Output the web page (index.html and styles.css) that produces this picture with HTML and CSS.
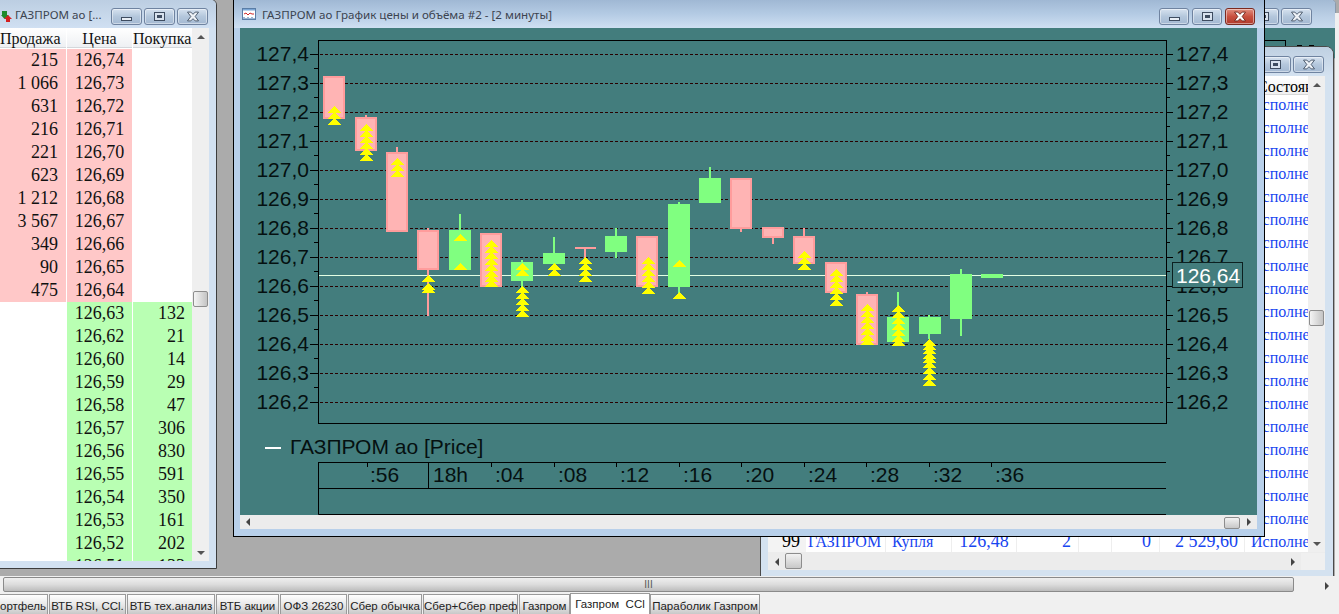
FILE: index.html
```html
<!DOCTYPE html>
<html lang="ru">
<head>
<meta charset="utf-8">
<title>ГАЗПРОМ ао</title>
<link rel="stylesheet" href="styles.css">
</head>
<body>
<div class="app">
  <div class="desktop">

    <section class="win win-back">
      <header class="titlebar">
        <div class="controls">
          <span class="btn"><i class="g-min"></i></span>
          <span class="btn"><i class="g-max"></i></span>
          <span class="btn"><svg class="g-x" viewBox="0 0 12 10"><path d="M1 1h3l2 2 2-2h3L8 5l3 4H8L6 7 4 9H1l3-4z"/></svg></span>
        </div>
      </header>
      <div class="back-body"><div class="back-axis"></div><div class="back-dash"></div></div>
    </section>

    <div class="edge-strip"></div>

    <section class="win win-orders">
      <header class="titlebar">
        <div class="controls">
          <span class="btn"><i class="g-max"></i></span>
          <span class="btn"><svg class="g-x" viewBox="0 0 12 10"><path d="M1 1h3l2 2 2-2h3L8 5l3 4H8L6 7 4 9H1l3-4z"/></svg></span>
        </div>
      </header>
      <div class="win-client">
        <div class="orders-main">
          <div class="orders-table">
            <div class="orders-row orders-head"><span class="o-state">Состояние</span></div>
            <div class="orders-row"><span class="o-state">Исполнена</span></div>
            <div class="orders-row"><span class="o-state">Исполнена</span></div>
            <div class="orders-row"><span class="o-state">Исполнена</span></div>
            <div class="orders-row"><span class="o-state">Исполнена</span></div>
            <div class="orders-row"><span class="o-state">Исполнена</span></div>
            <div class="orders-row"><span class="o-state">Исполнена</span></div>
            <div class="orders-row"><span class="o-state">Исполнена</span></div>
            <div class="orders-row"><span class="o-state">Исполнена</span></div>
            <div class="orders-row"><span class="o-state">Исполнена</span></div>
            <div class="orders-row"><span class="o-state">Исполнена</span></div>
            <div class="orders-row"><span class="o-state">Исполнена</span></div>
            <div class="orders-row"><span class="o-state">Исполнена</span></div>
            <div class="orders-row"><span class="o-state">Исполнена</span></div>
            <div class="orders-row"><span class="o-state">Исполнена</span></div>
            <div class="orders-row"><span class="o-state">Исполнена</span></div>
            <div class="orders-row"><span class="o-state">Исполнена</span></div>
            <div class="orders-row"><span class="o-state">Исполнена</span></div>
            <div class="orders-row"><span class="o-state">Исполнена</span></div>
            <div class="orders-row"><span class="o-state">Исполнена</span></div>
            <div class="orders-row">
              <span class="o-num">99</span><span class="o-name">ГАЗПРОМ</span><span class="o-side">Купля</span><span class="o-price">126,48</span><span class="o-qty">2</span><span class="o-gap"></span><span class="o-rest">0</span><span class="o-sum">2 529,60</span><span class="o-state">Исполнена</span>
            </div>
          </div>
          <div class="vscroll">
            <span class="arrow up"></span><span class="vspace"><span class="vthumb orders-thumb"></span></span><span class="arrow down"></span>
          </div>
        </div>
        <div class="orders-hscroll">
          <span class="arrow left"></span><span class="hthumb"></span><span class="hspace"></span><span class="arrow right"></span><span class="grip"></span>
        </div>
      </div>
    </section>

    <section class="win win-book">
      <header class="titlebar">
        <svg class="book-icon" viewBox="0 0 11 11"><path fill="#1d8a2c" d="M1 0h5v4h2L3.5 8 0 4h1z"/><path fill="#d42020" d="M7 4l4 4H9v3H5V8H3z"/></svg>
        <span class="title">ГАЗПРОМ ао [...</span>
        <div class="controls">
          <span class="btn"><i class="g-min"></i></span>
          <span class="btn"><i class="g-max"></i></span>
          <span class="btn"><svg class="g-x" viewBox="0 0 12 10"><path d="M1 1h3l2 2 2-2h3L8 5l3 4H8L6 7 4 9H1l3-4z"/></svg></span>
        </div>
      </header>
      <div class="book-client">
        <div class="book-table">
          <div class="book-row book-head"><span>Продажа</span><span>Цена</span><span>Покупка</span></div>
          <div class="book-row ask"><span>215</span><span>126,74</span><span></span></div>
          <div class="book-row ask"><span>1 066</span><span>126,73</span><span></span></div>
          <div class="book-row ask"><span>631</span><span>126,72</span><span></span></div>
          <div class="book-row ask"><span>216</span><span>126,71</span><span></span></div>
          <div class="book-row ask"><span>221</span><span>126,70</span><span></span></div>
          <div class="book-row ask"><span>623</span><span>126,69</span><span></span></div>
          <div class="book-row ask"><span>1 212</span><span>126,68</span><span></span></div>
          <div class="book-row ask"><span>3 567</span><span>126,67</span><span></span></div>
          <div class="book-row ask"><span>349</span><span>126,66</span><span></span></div>
          <div class="book-row ask"><span>90</span><span>126,65</span><span></span></div>
          <div class="book-row ask"><span>475</span><span>126,64</span><span></span></div>
          <div class="book-row bid"><span></span><span>126,63</span><span>132</span></div>
          <div class="book-row bid"><span></span><span>126,62</span><span>21</span></div>
          <div class="book-row bid"><span></span><span>126,60</span><span>14</span></div>
          <div class="book-row bid"><span></span><span>126,59</span><span>29</span></div>
          <div class="book-row bid"><span></span><span>126,58</span><span>47</span></div>
          <div class="book-row bid"><span></span><span>126,57</span><span>306</span></div>
          <div class="book-row bid"><span></span><span>126,56</span><span>830</span></div>
          <div class="book-row bid"><span></span><span>126,55</span><span>591</span></div>
          <div class="book-row bid"><span></span><span>126,54</span><span>350</span></div>
          <div class="book-row bid"><span></span><span>126,53</span><span>161</span></div>
          <div class="book-row bid"><span></span><span>126,52</span><span>202</span></div>
          <div class="book-row bid"><span></span><span>126,51</span><span>133</span></div>
        </div>
        <div class="vscroll">
          <span class="arrow up"></span><span class="vspace"><span class="vthumb book-thumb"></span></span><span class="arrow down"></span>
        </div>
      </div>
    </section>

    <section class="win win-chart">
      <header class="titlebar">
        <svg class="chart-icon" viewBox="0 0 14 14"><rect x="0.5" y="1.5" width="13" height="11" fill="#fff" stroke="#5a7da6"/><rect x="1" y="2" width="12" height="1.5" fill="#7ba6d6"/><path d="M2 7l2-1 2 2 2-2 2 1h2" fill="none" stroke="#d02828"/><path d="M2 12v-2M4 12v-1M6 12v-2M8 12v-1M10 12v-2M12 12v-1" stroke="#3a6ea8"/></svg>
        <span class="title">ГАЗПРОМ ао График цены и объёма #2 - [2 минуты]</span>
        <div class="controls">
          <span class="btn"><i class="g-min"></i></span>
          <span class="btn"><i class="g-max"></i></span>
          <span class="btn close"><svg class="g-x" viewBox="0 0 12 10"><path d="M1 1h3l2 2 2-2h3L8 5l3 4H8L6 7 4 9H1l3-4z"/></svg></span>
        </div>
      </header>
      <div class="chart-client">
        <svg class="chart" viewBox="240 28 1017 487" width="1017" height="487">
          <defs>
            <path id="a" d="M0 0h1v1h1v1h1v1h1v1h1v1h1v1h1v1H-6v-1h1v-1h1v-1h1v-1h1v-1h1v-1h1z"/>
            <g id="s2"><use href="#a"/><use href="#a" y="6"/></g>
            <g id="s3"><use href="#s2"/><use href="#a" y="12"/></g>
            <g id="s4"><use href="#s3"/><use href="#a" y="18"/></g>
            <g id="s5"><use href="#s4"/><use href="#a" y="24"/></g>
            <g id="s6"><use href="#s5"/><use href="#a" y="30"/></g>
            <g id="s7"><use href="#s6"/><use href="#a" y="34"/></g>
            <g id="s8"><use href="#s6"/><use href="#a" y="35"/><use href="#a" y="40"/></g>
          </defs>

          <g class="grid">
            <path d="M310 54.5H1164M310 83.5H1164M310 112.5H1164M310 141.5H1164M310 170.5H1164M310 199.5H1164M310 228.5H1164M310 257.5H1164M310 286.5H1164M310 315.5H1164M310 344.5H1164M310 373.5H1164M310 402.5H1164"/>
          </g>
          <g class="axis">
            <rect x="318.5" y="40.5" width="848" height="383"/>
            <path d="M310 54.5h8M310 83.5h8M310 112.5h8M310 141.5h8M310 170.5h8M310 199.5h8M310 228.5h8M310 257.5h8M310 286.5h8M310 315.5h8M310 344.5h8M310 373.5h8M310 402.5h8"/>
            <path d="M314 68.5h4M314 97.5h4M314 126.5h4M314 155.5h4M314 184.5h4M314 213.5h4M314 242.5h4M314 271.5h4M314 300.5h4M314 329.5h4M314 358.5h4M314 387.5h4"/>
            <path d="M1166 54.5h7M1166 83.5h7M1166 112.5h7M1166 141.5h7M1166 170.5h7M1166 199.5h7M1166 228.5h7M1166 257.5h7M1166 286.5h7M1166 315.5h7M1166 344.5h7M1166 373.5h7M1166 402.5h7"/>
            <path d="M1166 68.5h4M1166 97.5h4M1166 126.5h4M1166 155.5h4M1166 184.5h4M1166 213.5h4M1166 242.5h4M1166 271.5h4M1166 300.5h4M1166 329.5h4M1166 358.5h4M1166 387.5h4"/>
          </g>

          <g class="labels-left">
            <text x="309" y="61">127,4</text><text x="309" y="90">127,3</text><text x="309" y="119">127,2</text><text x="309" y="148">127,1</text><text x="309" y="177">127,0</text><text x="309" y="206">126,9</text><text x="309" y="235">126,8</text><text x="309" y="264">126,7</text><text x="309" y="293">126,6</text><text x="309" y="322">126,5</text><text x="309" y="351">126,4</text><text x="309" y="380">126,3</text><text x="309" y="409">126,2</text>
          </g>
          <g class="labels-right">
            <text x="1176" y="61">127,4</text><text x="1176" y="90">127,3</text><text x="1176" y="119">127,2</text><text x="1176" y="148">127,1</text><text x="1176" y="177">127,0</text><text x="1176" y="206">126,9</text><text x="1176" y="235">126,8</text><text x="1176" y="264">126,7</text><text x="1176" y="293">126,6</text><text x="1176" y="322">126,5</text><text x="1176" y="351">126,4</text><text x="1176" y="380">126,3</text><text x="1176" y="409">126,2</text>
          </g>

          <path class="price-line" d="M319 275.5H1166"/>

          <g class="up">
            <rect x="459" y="214" width="2" height="16"/><rect x="449" y="230" width="22" height="40"/>
            <rect x="521" y="260" width="2" height="30"/><rect x="511" y="262" width="22" height="19"/>
            <rect x="553" y="237" width="2" height="16"/><rect x="543" y="253" width="22" height="11"/>
            <rect x="615" y="228" width="2" height="30"/><rect x="605" y="236" width="22" height="16"/>
            <rect x="678" y="202" width="2" height="91"/><rect x="668" y="204" width="22" height="83"/>
            <rect x="709" y="167" width="2" height="11"/><rect x="699" y="178" width="22" height="25"/>
            <rect x="897" y="292" width="2" height="25"/><rect x="887" y="317" width="22" height="25"/>
            <rect x="928" y="315" width="2" height="24"/><rect x="919" y="317" width="22" height="17"/>
            <rect x="960" y="269" width="2" height="67"/><rect x="950" y="274" width="22" height="45"/>
            <rect x="981" y="274" width="22" height="4"/>
          </g>
          <g class="down-wick">
            <rect x="365" y="115" width="2" height="3"/>
            <rect x="396" y="147" width="2" height="6"/>
            <rect x="427" y="228" width="2" height="88"/>
            <rect x="584" y="248" width="2" height="10"/>
            <rect x="740" y="228" width="2" height="4"/>
            <rect x="772" y="237" width="2" height="7"/>
            <rect x="803" y="228" width="2" height="9"/>
            <rect x="866" y="292" width="2" height="3"/>
          </g>
          <g class="down">
            <rect x="324" y="77" width="20" height="41"/>
            <rect x="356" y="118" width="20" height="32"/>
            <rect x="387" y="153" width="20" height="78"/>
            <rect x="418" y="231" width="20" height="38"/>
            <rect x="481" y="234" width="20" height="52"/>
            <rect x="637" y="237" width="20" height="49"/>
            <rect x="731" y="179" width="20" height="49"/>
            <rect x="763" y="228" width="20" height="9"/>
            <rect x="794" y="237" width="20" height="26"/>
            <rect x="826" y="263" width="20" height="29"/>
            <rect x="857" y="295" width="20" height="49"/>
          </g>
          <rect class="doji" x="575" y="247" width="21" height="2"/>

          <g class="arrows">
            <use href="#s3" x="334" y="106"/>
            <use href="#s6" x="366" y="124"/>
            <use href="#s3" x="397" y="158"/>
            <use href="#a" x="428" y="275"/><use href="#a" x="428" y="283"/><use href="#a" x="428" y="286"/>
            <use href="#a" x="460" y="234"/><use href="#a" x="460" y="263"/>
            <use href="#s8" x="491" y="240"/>
            <use href="#s2" x="522" y="263"/>
            <use href="#s5" x="522" y="286"/>
            <use href="#s2" x="554" y="263"/>
            <use href="#s4" x="585" y="257"/>
            <use href="#s6" x="648" y="257"/>
            <use href="#a" x="679" y="260"/><use href="#a" x="679" y="292"/>
            <use href="#s3" x="804" y="251"/>
            <use href="#s6" x="836" y="269"/>
            <use href="#s7" x="867" y="304"/>
            <use href="#s7" x="898" y="305"/>
            <use href="#a" x="929" y="339"/><use href="#a" x="929" y="343"/><use href="#a" x="929" y="347"/><use href="#a" x="929" y="352"/><use href="#a" x="929" y="356"/><use href="#a" x="929" y="361"/><use href="#a" x="929" y="367"/><use href="#a" x="929" y="373"/><use href="#a" x="929" y="379"/>
          </g>

          <rect class="price-box" x="1172.5" y="262.5" width="70" height="25"/>
          <text class="price-text" x="1176" y="283">126,64</text>

          <path class="legend-dash" d="M265 448h16"/>
          <text class="legend" x="290" y="454">ГАЗПРОМ ао [Price]</text>

          <g class="axis">
            <path d="M318.5 462V514.5H1166M318 462.5H1166M318 488.5H1166M428.5 462V488M367.5 462v5M491.5 462v5M554.5 462v5M616.5 462v5M679.5 462v5M741.5 462v5M804.5 462v5M866.5 462v5M929.5 462v5M991.5 462v5"/>
          </g>
          <g class="time">
            <text x="370" y="482">:56</text><text x="433" y="482">18h</text><text x="495" y="482">:04</text><text x="558" y="482">:08</text><text x="620" y="482">:12</text><text x="683" y="482">:16</text><text x="745" y="482">:20</text><text x="808" y="482">:24</text><text x="870" y="482">:28</text><text x="933" y="482">:32</text><text x="995" y="482">:36</text>
          </g>
        </svg>
        <div class="chart-hscroll">
          <span class="arrow left"></span><span class="hspace"></span><span class="hthumb chart-thumb"></span><span class="arrow right"></span>
        </div>
      </div>
    </section>
  </div>

  <div class="app-scroll">
    <div class="app-thumb"><span class="thumb-grip">III</span></div>
    <span class="arrow right"></span>
  </div>

  <nav class="tabs">
    <span class="tab t1">ортфель</span>
    <span class="tab t2">ВТБ RSI, CCl.</span>
    <span class="tab t3">ВТБ тех.анализ</span>
    <span class="tab t4">ВТБ акции</span>
    <span class="tab t5">ОФЗ 26230</span>
    <span class="tab t6">Сбер обычка</span>
    <span class="tab t7">Сбер+Сбер преф</span>
    <span class="tab t8">Газпром</span>
    <span class="tab t9 active">Газпром&nbsp; CCl</span>
    <span class="tab t10">Параболик Газпром</span>
  </nav>
</div>
</body>
</html>
```
FILE: styles.css
```css
* { box-sizing: border-box; }
html, body { margin: 0; padding: 0; height: 100%; overflow: hidden; background: #f0f0f0; }
.app { width: 1339px; height: 614px; display: flex; flex-direction: column; font-family: "Liberation Serif", serif; }

.desktop { position: relative; height: 576px; background: #ababab; overflow: hidden; flex: none; }
.edge-strip { position: absolute; right: 0; top: 13px; bottom: 0; width: 4px; background: #f0f0f0; }

.win { position: absolute; background: #c9dbee; border: 1px solid #3c3c3c; border-radius: 5px 5px 0 0; display: flex; flex-direction: column; overflow: hidden; }
.titlebar { height: 28px; flex: none; display: flex; align-items: center; position: relative; background: linear-gradient(#a3bad4, #bcd0e6 60%, #c9dbee); }
.title { font: 11.6px "Noto Sans", "Open Sans", sans-serif; color: #3c4450; white-space: nowrap; }
.controls { position: absolute; top: 8px; display: flex; }
.btn { width: 31px; height: 17px; margin-right: 2px; border: 1px solid #6f83a0; border-radius: 3px; background: linear-gradient(#d6e2ef, #b4c7dc 50%, #a4b9d2); display: flex; align-items: center; justify-content: center; box-shadow: inset 0 0 0 1px rgba(255,255,255,.45); }
.btn.close { background: linear-gradient(#e08f80, #c9503f 50%, #b03a2c); border-color: #7c2a20; }
.g-min { display: block; width: 11px; height: 4px; margin-top: 5px; background: #e8eef5; border: 1px solid #3e4c60; }
.g-max { display: block; width: 11px; height: 9px; background: #d8e2ee; border: 1px solid #3e4c60; box-shadow: inset 0 0 0 2px #d8e2ee, inset 0 0 0 4px #3e4c60; }
.g-x { width: 14px; height: 11px; fill: #eef2f7; stroke: #3e4c60; stroke-width: .8; }
.btn.close .g-x { stroke: #6a1f16; fill: #fff; }

/* far background window, top right */
.win-back { left: 1000px; top: -1px; width: 336px; height: 60px; background: #c5d6e8; border-color: #8a9aac; }
.win-back .controls { right: 21px; }
.back-body { flex: 1; background: #437d7d; position: relative; }
.back-axis { position: absolute; left: 255px; top: 12px; width: 30px; height: 6px; border-top: 1px solid #000; border-right: 1px solid #000; }
.back-dash { position: absolute; left: 296px; top: 17px; width: 18px; height: 1px; background: repeating-linear-gradient(90deg, #000 0 5px, transparent 5px 12px); }

/* orders window */
.win-orders { left: 760px; top: 46px; width: 574px; height: 531px; border-color: #4a4a4a; border-radius: 0 8px 0 0; background: #d4e2f0; }
.win-orders .titlebar { height: 29px; background: linear-gradient(#bfd0e2, #d4e2f0); }
.win-orders .controls { top: 9px; right: 7px; }
.win-client { flex: 1; display: flex; flex-direction: column; padding: 0 8px 6px 7px; min-height: 0; }
.orders-main { flex: 1; display: flex; min-height: 0; }
.orders-table { flex: 1; overflow: hidden; background: #fff; color: #1846f0; font-size: 16px; }
.orders-row { height: 23px; display: flex; align-items: stretch; justify-content: flex-end; line-height: 19px; white-space: nowrap; }
.orders-row span { display: block; flex: none; overflow: hidden; }
.orders-head { height: 19px; line-height: 21px; color: #000; background: linear-gradient(#fff, #f0f0f0); border-bottom: 1px solid #d8d8d8; }
.orders-head .o-state { padding-left: 12px; }
.o-num { width: 39px; padding-right: 6px; text-align: right; color: #000; background: #f3f3f3; font-size: 18px; }
.o-name { width: 80px; padding-left: 2px; border-right: 1px solid #eee; }
.o-side { width: 66px; padding-left: 6px; border-right: 1px solid #eee; }
.o-price { width: 65px; font-size: 18px; text-align: center; border-right: 1px solid #eee; }
.o-qty { width: 62px; text-align: right; padding-right: 7px; font-size: 18px; border-right: 1px solid #eee; }
.o-gap { width: 33px; border-right: 1px solid #eee; }
.o-rest { width: 48px; text-align: right; padding-right: 8px; font-size: 18px; border-right: 1px solid #eee; }
.o-sum { width: 85px; text-align: right; padding-right: 6px; font-size: 18px; border-right: 1px solid #eee; }
.o-state { width: 63px; padding-left: 6px; }

.vscroll { width: 17px; flex: none; background: #efefef; display: flex; flex-direction: column; align-items: center; }
.vspace { flex: 1; align-self: stretch; position: relative; }
.vthumb { position: absolute; left: 0; width: 15px; height: 16px; margin-left: 1px; border: 1px solid #8d8d8d; border-radius: 2px; background: linear-gradient(90deg, #f4f4f4, #c4c4c4); }
.book-thumb { top: 246px; }
.orders-thumb { top: 217px; }
.arrow { flex: none; width: 17px; height: 17px; position: relative; display: block; }
.arrow::after { content: ""; position: absolute; left: 50%; top: 50%; width: 0; height: 0; border-style: solid; border-color: transparent; }
.arrow.up::after { margin: -2px 0 0 -4px; border-width: 0 4px 4px; border-bottom-color: #555; }
.arrow.down::after { margin: -2px 0 0 -4px; border-width: 4px 4px 0; border-top-color: #555; }
.arrow.left::after { margin: -4px 0 0 -2px; border-width: 4px 4px 4px 0; border-right-color: #444; }
.arrow.right::after { margin: -4px 0 0 -2px; border-width: 4px 0 4px 4px; border-left-color: #444; }

.orders-hscroll { height: 18px; flex: none; display: flex; background: #ececec; padding-top: 1px; }
.hspace { flex: 1; }
.hthumb { width: 17px; height: 16px; flex: none; border: 1px solid #8d8d8d; border-radius: 2px; background: linear-gradient(#f2f2f2, #c8c8c8); }
.grip { width: 24px; flex: none; background: #f0f0f0; }

/* order book window */
.win-book { left: -1px; top: -1px; width: 218px; height: 570px; background: #d2e1f1; border-radius: 0 6px 0 0; }
.win-book .titlebar { padding-left: 1px; background: linear-gradient(#bccee2, #d0e0f2); }
.win-book .controls { left: 111px; }
.book-icon { width: 11px; height: 11px; margin: 4px 3px 0 0; flex: none; }
.book-client { height: 533px; display: flex; margin: 0 7px 0 0; overflow: hidden; flex: none; }
.book-table { flex: 1; background: #fff; overflow: hidden; min-width: 0; }
.book-row { display: grid; grid-template-columns: 66px 66px 61px; height: 23px; line-height: 23px; font-size: 18px; color: #111; }
.book-row span { display: block; padding-right: 8px; text-align: right; }
.book-row span + span { border-left: 1px solid #fff; }
.book-row span:nth-child(2) { text-align: center; padding-right: 0; }
.book-head { height: 20px; line-height: 21px; font-size: 16px; margin-bottom: 1px; background: linear-gradient(#fff, #eef0f3); border-bottom: 1px solid #d4d8dc; }
.book-head span { text-align: center; padding: 0 2px 0 0; white-space: nowrap; }
.book-head span:nth-child(1) { text-align: left; padding: 0; }
.ask span:nth-child(1), .ask span:nth-child(2) { background: #ffc8c8; }
.bid span:nth-child(2), .bid span:nth-child(3) { background: #b9ffb3; }

/* chart window */
.win-chart { left: 233px; top: -1px; width: 1032px; height: 538px; border-color: #000; background: #b8d0ea; border-radius: 0; }
.win-chart .titlebar { padding-left: 8px; background: linear-gradient(#a0b8d4, #b4cbe4 50%, #cfe0f2); }
.win-chart .controls { left: 925px; }
.win-chart .btn { margin-right: 3px; width: 30px; }
.chart-icon { width: 14px; height: 14px; margin-right: 6px; flex: none; }
.chart-client { margin: 0 7px 0 6px; flex: none; }
.chart { display: block; background: #437d7d; }
.chart-hscroll { height: 14px; display: flex; background: #ececec; }
.chart-hscroll .arrow { height: 14px; }
.chart-hscroll .arrow.left { margin-left: -1px; }
.chart-thumb { width: 16px; height: 12px; margin: 2px 0 0 0; }
.chart-hscroll .hspace { flex: 1; }

.grid path { fill: none; stroke: #280000; stroke-dasharray: 3 2; }
.axis { fill: none; stroke: #000; }
.labels-left text, .labels-right text, .time text, .legend { font: 21px "Liberation Sans", sans-serif; fill: #051010; }
.labels-left text { text-anchor: end; }
.price-line { stroke: #e4ffe4; fill: none; }
.up rect { fill: #80ff80; shape-rendering: crispEdges; }
.down-wick rect { fill: #ff9c9c; shape-rendering: crispEdges; }
.down rect { fill: #ffb4b4; stroke: #ff9c9c; stroke-width: 2; shape-rendering: crispEdges; }
.doji { fill: #ff9c9c; }
.arrows { fill: #ffff00; shape-rendering: crispEdges; }
.price-box { fill: #437d7d; stroke: #0c2020; }
.price-text { font: 21px "Liberation Sans", sans-serif; fill: #fff; }
.legend-dash { stroke: #fff; stroke-width: 2; fill: none; }

/* application scrollbar */
.app-scroll { height: 17px; flex: none; display: flex; background: #f0f0f0; padding: 1px 0 1px 3px; }
.app-thumb { flex: none; width: 1291px; border: 1px solid #8a8a8a; border-radius: 2px; background: linear-gradient(#efefef, #dcdcdc 50%, #bcbcbc); display: flex; align-items: center; justify-content: center; }
.thumb-grip { font: 10px/1 "Liberation Sans", sans-serif; color: #555; }
.app-scroll .arrow { margin-left: 24px; }

/* tabs */
.tabs { height: 21px; flex: none; display: flex; background: #f0f0f0; overflow: hidden; align-items: flex-end; }
.tab { flex: none; height: 20px; border: 1px solid #9a9a9a; border-bottom: 0; margin-right: 1px; background: linear-gradient(#ffffff, #e6e6e6 55%, #c8c8c8); font: 11.5px/22px "Liberation Sans", sans-serif; color: #222; text-align: center; white-space: nowrap; overflow: hidden; }
.tab.active { height: 21px; background: #fff; line-height: 21px; margin-right: 0; }
.t1 { width: 48px; border-left: 0; text-align: right; padding-right: 4px; }
.t2 { width: 77px; }
.t3 { width: 88px; }
.t4 { width: 63px; }
.t5 { width: 67px; }
.t6 { width: 74px; }
.t7 { width: 95px; }
.t8 { width: 51px; margin-right: 0; }
.t9 { width: 80px; }
.t10 { width: 110px; }
```
